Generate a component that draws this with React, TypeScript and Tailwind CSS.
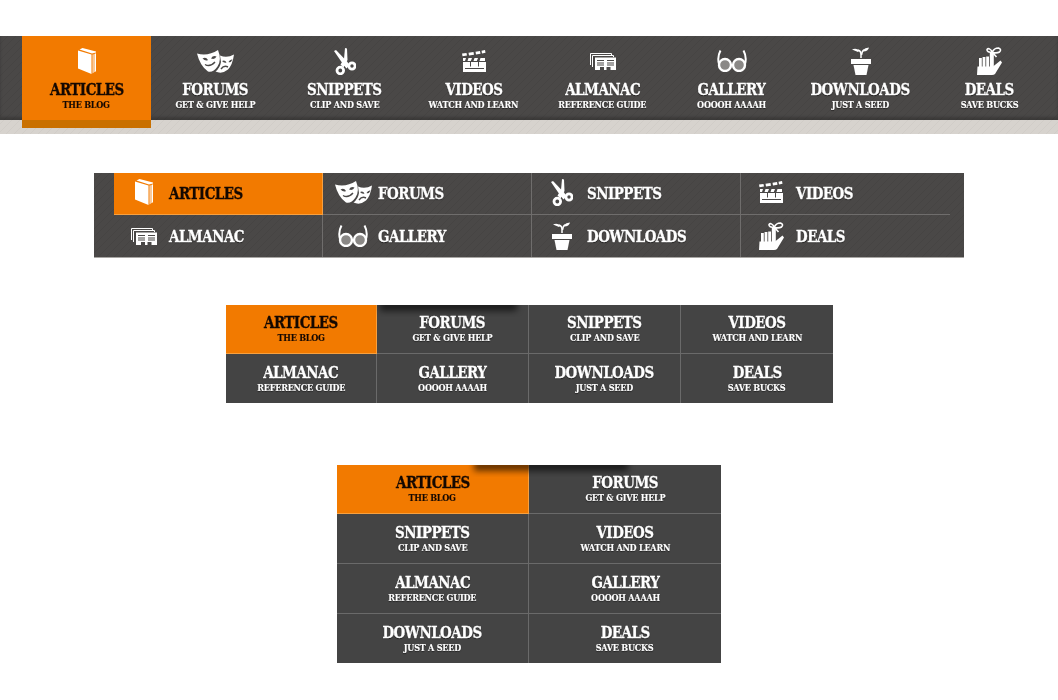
import React from "react";

const D = "#4a4847";
type IconName = "book" | "masks" | "scissors" | "clapper" | "almanac" | "glasses" | "plant" | "hand";

function Icon({ name }: { name: IconName }) {
  switch (name) {
    case "book":
      return (
        <svg width="18" height="26" viewBox="0 0 18 26" fill="#fff">
          <path d="M0 2.5V20.5L13.5 26V6.5Z" />
          <path d="M1.5 1.5L4.5 0L18 3.6V4.6L14 5.6Z" />
          <path d="M14.6 6.6L15.6 6.2V24.6L14.6 25.4Z" />
          <path d="M16.4 5.9L18 5.3V23.2L16.4 24.2Z" />
        </svg>
      );
    case "masks":
      return (
        <svg width="37" height="23" viewBox="0 0 37 23">
          <path fill="#fff" d="M0 3.5Q11 6.5 21 0Q25 10 20.5 16.5Q16 23 11 21.5Q3 16 0 3.5Z" />
          <path fill="#fff" d="M23 5.5Q30 8.5 37 4.5Q35.5 15 31 19.5Q25 24.5 18.5 21.5Q23 18 24 12Z" />
          <path fill={D} d="M5.5 8.5Q9 6.5 11 10Q8.5 11.5 5.5 8.5ZM14 8.5Q16 5 19.5 6.5Q18 10 14 8.5Z" />
          <path fill="none" stroke={D} strokeWidth="1.4" d="M8 14.5Q13 17.5 18 12" />
          <path fill={D} d="M25 11Q28 9.5 29.5 12.5Q27 13.5 25 11ZM31.5 12Q33 9 35.5 9.5Q34 13 31.5 12Z" />
          <path fill="none" stroke={D} strokeWidth="1.4" d="M24 19Q27 15 31 17" />
        </svg>
      );
    case "scissors":
      return (
        <svg width="22" height="27" viewBox="0 0 22 27" fill="none">
          <path fill="#fff" d="M0 3L2 2L13 13.5L15.5 17L12.5 20.5L10 17.5Z" />
          <path fill="#fff" d="M11 0L13 0.5L13.5 12L9.5 19.5L6.5 16.5L10 11Z" />
          <circle cx="6.3" cy="22.5" r="3.3" stroke="#fff" strokeWidth="2.8" />
          <circle cx="18" cy="18" r="3.1" stroke="#fff" strokeWidth="2.8" />
        </svg>
      );
    case "clapper":
      return (
        <svg width="24" height="22" viewBox="0 0 24 22" fill="#fff">
          <path d="M0 3.5L4.5 3L5 5.6L0.5 6.2ZM6.5 2.7L11.5 2L12 4.7L7 5.4ZM13.5 1.7L18 1L18.5 3.7L14 4.4ZM19.5 .7L23 0L23.5 2.8L20 3.4Z" />
          <path d="M1 8H4L3 11H1ZM6.5 8H10L8.8 11H5.5ZM12.5 8H16L14.8 11H11.5ZM18.5 8H23V11H17.5Z" />
          <path d="M1 12H24V22H1Z" />
          <rect x="8" y="12" width="1" height="4.5" fill={D} />
          <rect x="16" y="12" width="1" height="4.5" fill={D} />
          <rect x="3" y="18" width="19" height="1" fill={D} />
        </svg>
      );
    case "almanac":
      return (
        <svg width="26" height="17" viewBox="0 0 26 17" fill="none">
          <path stroke="#fff" d="M21.5 2V.5H.5V12" />
          <path stroke="#fff" d="M23.5 4V2.5H2.5V14" />
          <path fill="#fff" d="M5 4.5H26V17H20.5V14H16.5V17H14V14H10V17H5Z" />
          <path stroke={D} d="M7 7.5H14M17 7.5H24M7 10H14M17 10H24M7 12H14M17 12H24" />
        </svg>
      );
    case "glasses":
      return (
        <svg width="30" height="22" viewBox="0 0 30 22" fill="none">
          <circle cx="8" cy="15" r="6" fill="#8a8886" stroke="#fff" strokeWidth="2.4" />
          <circle cx="22" cy="15" r="6" fill="#8a8886" stroke="#fff" strokeWidth="2.4" />
          <path stroke="#fff" strokeWidth="2" d="M2 14Q0 7 3.5 0.5M28 14Q30 7 26.5 0.5" />
        </svg>
      );
    case "plant":
      return (
        <svg width="20" height="28" viewBox="0 0 20 28" fill="#fff">
          <rect x="0" y="12" width="20" height="5" />
          <path d="M2.5 18H17.5L15.5 28H4.5Z" />
          <path fill="none" stroke="#fff" strokeWidth="1.5" d="M10 11V7Q10 4 7 3" />
          <path d="M1 2.5Q5 .5 8.5 3.5L7 5Q4 3.5 1 2.5Z" />
          <path fill="none" stroke="#fff" strokeWidth="1.5" d="M10.5 8Q11 4 13 3" />
          <path d="M12 3Q14 .5 18 0.5Q17 4 13.5 4.5Z" />
        </svg>
      );
    case "hand":
      return (
        <svg width="25" height="28" viewBox="0 0 25 28" fill="#fff">
          <rect x="2" y="11" width="2.8" height="9" />
          <rect x="5.6" y="10" width="2.8" height="10" />
          <rect x="9.2" y="9.5" width="2.8" height="10.5" />
          <rect x="12.8" y="6" width="4" height="14" />
          <path d="M0.5 19.5H16L23.5 13.5L25 15.5L18 27Q17 28 15 28H0Z" />
          <path fill="none" stroke="#fff" strokeWidth="1.6" d="M16 5.5Q9.5 5.5 10 2.5Q12 0 15.5 5Q17 1 21.5 1Q25 2.5 22.5 5Q20 6.5 16 5.5ZM16 6L19.5 10" />
        </svg>
      );
  }
}

const items: { t: string; s: string; i: IconName }[] = [
  { t: "ARTICLES", s: "THE BLOG", i: "book" },
  { t: "FORUMS", s: "GET & GIVE HELP", i: "masks" },
  { t: "SNIPPETS", s: "CLIP AND SAVE", i: "scissors" },
  { t: "VIDEOS", s: "WATCH AND LEARN", i: "clapper" },
  { t: "ALMANAC", s: "REFERENCE GUIDE", i: "almanac" },
  { t: "GALLERY", s: "OOOOH AAAAH", i: "glasses" },
  { t: "DOWNLOADS", s: "JUST A SEED", i: "plant" },
  { t: "DEALS", s: "SAVE BUCKS", i: "hand" },
];

const stripes =
  "bg-[repeating-linear-gradient(135deg,#4a4847_0px,#4a4847_4.95px,#464443_4.95px,#464443_5.657px)]";

function Title({ t, active, left }: { t: string; active: boolean; left?: boolean }) {
  return (
    <div
      className={`[font-family:DejaVu_Serif,serif] font-bold text-[16px] leading-[18px] whitespace-nowrap scale-x-[0.84] tracking-[-0.6px] [-webkit-text-stroke:0.3px] ${
        left ? "origin-left" : ""
      } ${active ? "text-[#140800]" : "text-white [text-shadow:0_1px_1px_rgba(0,0,0,0.6)]"}`}
    >
      {t}
    </div>
  );
}

function Sub({ s, active }: { s: string; active: boolean }) {
  return (
    <div
      className={`[font-family:DejaVu_Serif,serif] font-bold text-[10px] leading-[12px] whitespace-nowrap scale-x-[0.81] tracking-[-0.3px] [-webkit-text-stroke:0.15px] ${
        active ? "text-[#140800]" : "text-white [text-shadow:0_1px_1px_rgba(0,0,0,0.5)]"
      }`}
    >
      {s}
    </div>
  );
}

function Wide() {
  return (
    <div className="mt-9 h-[98px] bg-[repeating-linear-gradient(135deg,#d7d3ce_0px,#d7d3ce_4.95px,#d1cdc8_4.95px,#d1cdc8_5.657px)]">
      <div className={`h-[84px] pl-[22px] flex items-start ${stripes} shadow-[inset_0_-3px_3px_rgba(0,0,0,0.2)]`}>
        {items.map((it, n) => (
          <div
            key={it.t}
            className={`w-[129px] shrink-0 flex flex-col items-center ${
              n === 0 ? "h-[92px] bg-[#f27a00] border-b-8 border-[#c97000]" : "h-[84px]"
            }`}
          >
            <div className="h-[45px] pt-[5px] flex items-center justify-center">
              <Icon name={it.i} />
            </div>
            <Title t={it.t} active={n === 0} />
            <Sub s={it.s} active={n === 0} />
          </div>
        ))}
      </div>
    </div>
  );
}

function Medium() {
  return (
    <div className={`mt-[39px] ml-[94px] w-[870px] h-[85px] pl-5 pr-[14px] ${stripes} border-b border-[#a8a6a3] grid grid-cols-4`}>
      {items.map((it, n) => (
        <div
          key={it.t}
          className={`h-[42px] flex items-center pl-[5px] border-[#6f6d6c] ${n < 4 ? "border-b" : "pt-px"} ${
            n % 4 !== 3 ? "border-r" : ""
          } ${n === 0 ? "bg-[#f27a00] border-[#f7a040]" : ""}`}
        >
          <div className={`w-[50px] flex justify-center shrink-0 ${n < 4 ? "-mt-[3px]" : "-mt-px"}`}>
            <Icon name={it.i} />
          </div>
          <Title t={it.t} active={n === 0} left />
        </div>
      ))}
    </div>
  );
}

function Flat({ four }: { four: boolean }) {
  const perRow = four ? 4 : 2;
  const rows = items.length / perRow;
  return (
    <div
      className={`relative bg-[#444444] grid ${
        four
          ? "mt-[47px] ml-[226px] w-[607px] grid-cols-[151px_152px_152px_152px]"
          : "mt-[62px] ml-[337px] w-[384px] grid-cols-[192px_192px]"
      }`}
    >
      {items.map((it, n) => {
        const row = Math.floor(n / perRow);
        const lastRow = row === rows - 1;
        const lastCol = n % perRow === perRow - 1;
        return (
          <div
            key={it.t}
            className={`flex flex-col items-center border-[#6a6a6a] ${row === 0 || lastRow ? "h-[49px]" : "h-[50px]"} ${
              row === 0 ? "pt-[9px]" : "pt-[10px]"
            } ${lastRow ? "" : "border-b"} ${lastCol ? "" : "border-r"} ${
              n === 0 ? "bg-[#f27a00] border-[#f7a040]" : ""
            }`}
          >
            <Title t={it.t} active={n === 0} />
            <Sub s={it.s} active={n === 0} />
          </div>
        );
      })}
      <div
        className={`absolute top-0 h-3 overflow-hidden ${
          four ? "left-[150px] w-[150px]" : "left-[105px] w-[195px]"
        }`}
      >
        <div
          className={`absolute -top-[4px] h-[10px] bg-black/60 blur-[3px] rounded-r-full ${
            four ? "left-1 right-2" : "left-8 right-2"
          }`}
        />
      </div>
    </div>
  );
}

export default function App() {
  return (
    <div className="w-[1058px] h-[700px] bg-white overflow-hidden">
      <Wide />
      <Medium />
      <Flat four />
      <Flat four={false} />
    </div>
  );
}
